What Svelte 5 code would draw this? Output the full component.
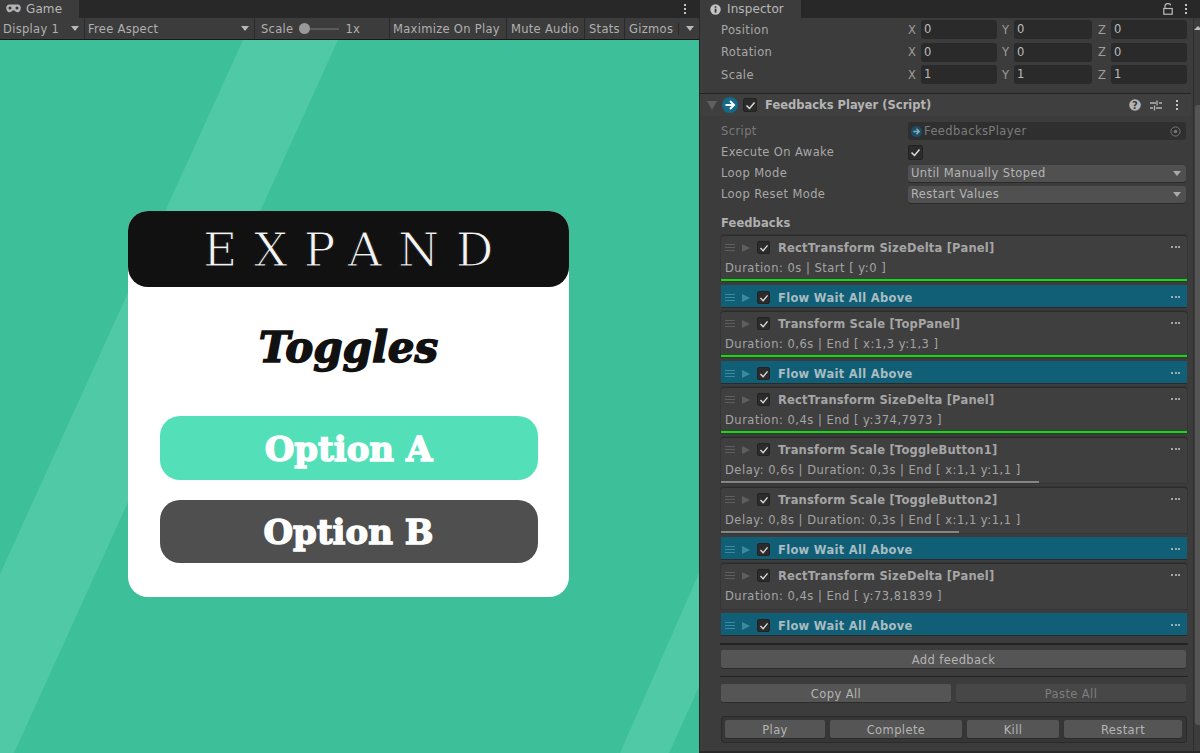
<script>
  // xyz rows at the top of the inspector
  const transformRows = [
    { label: 'Position', v: '0' },
    { label: 'Rotation', v: '0' },
    { label: 'Scale', v: '1' }
  ];

  const feedbacks = [
    { title: 'RectTransform SizeDelta [Panel]', info: 'Duration: 0s | Start [ y:0 ]', bar: '100%', color: 'green' },
    { flow: true },
    { title: 'Transform Scale [TopPanel]', info: 'Duration: 0,6s | End [ x:1,3 y:1,3 ]', bar: '100%', color: 'green' },
    { flow: true },
    { title: 'RectTransform SizeDelta [Panel]', info: 'Duration: 0,4s | End [ y:374,7973 ]', bar: '100%', color: 'green' },
    { title: 'Transform Scale [ToggleButton1]', info: 'Delay: 0,6s | Duration: 0,3s | End [ x:1,1 y:1,1 ]', bar: '318px', color: 'grey' },
    { title: 'Transform Scale [ToggleButton2]', info: 'Delay: 0,8s | Duration: 0,3s | End [ x:1,1 y:1,1 ]', bar: '238px', color: 'grey' },
    { flow: true },
    { title: 'RectTransform SizeDelta [Panel]', info: 'Duration: 0,4s | End [ y:73,81839 ]' },
    { flow: true }
  ];
</script>

<div class="editor">
  <section class="game">
    <div class="tabbar">
      <div class="tab game-tab">
        <svg width="15" height="10" viewBox="0 0 15 10"><path d="M3.5 0.5h8a3.2 3.2 0 0 1 3 4.5 3 3 0 0 1-5 2.5L8.500 6.500h-2L5.500 7.500a3 3 0 0 1-5-2.500 3.200 3.200 0 0 1 3-4.500z" fill="#b4b4b4"/><circle cx="4" cy="4" r="1.500" fill="#333"/><circle cx="11" cy="4" r="1.500" fill="#333"/></svg>
        <span>Game</span>
      </div>
      <div class="spacer"></div>
      <div class="kebab"><i></i><i></i><i></i></div>
    </div>
    <div class="toolbar">
      <div class="tool display">Display 1<b class="caret"></b></div>
      <div class="tool aspect">Free Aspect<b class="caret"></b></div>
      <div class="tool scale">
        Scale
        <span class="slider"><i></i></span>
        <span class="one">1x</span>
      </div>
      <div class="tool maximize">Maximize On Play</div>
      <div class="tool mute">Mute Audio</div>
      <div class="tool stats">Stats</div>
      <div class="tool gizmos">Gizmos<u></u><b class="caret"></b></div>
    </div>
    <div class="viewport">
      <svg class="stripes" width="699" height="713" viewBox="0 0 699 713">
        <polygon points="243,0 338,0 14,713 0,743 0,534" fill="#50c9a6"/>
        <polygon points="699,533 699,647 669,713 620,713" fill="#50c9a6"/>
      </svg>
      <div class="panel">
        <div class="panel-head">EXPAND</div>
        <div class="panel-title">Toggles</div>
        <div class="opt opt-a">Option A</div>
        <div class="opt opt-b">Option B</div>
      </div>
    </div>
  </section>

  <section class="inspector">
    <div class="tabbar">
      <div class="tab insp-tab">
        <svg width="11" height="11" viewBox="0 0 11 11"><circle cx="5.500" cy="5.500" r="5.200" fill="#c4c4c4"/><rect x="4.700" y="4.600" width="1.700" height="4" fill="#333"/><rect x="4.700" y="2.200" width="1.700" height="1.600" fill="#333"/></svg>
        <span>Inspector</span>
      </div>
      <div class="spacer"></div>
      <svg class="lock" width="10" height="12" viewBox="0 0 10 12"><path d="M2 5V3a3 2.500 0 0 1 5.800-.8" fill="none" stroke="#bbb" stroke-width="1.200"/><rect x="0.800" y="5.500" width="8.400" height="5.700" fill="none" stroke="#bbb" stroke-width="1.200"/></svg>
      <div class="kebab"><i></i><i></i><i></i></div>
    </div>

    <div class="body">
      <div class="content">
        <div class="transform">
          {#each transformRows as row}
            <div class="xyz">
              <span class="label">{row.label}</span>
              <span class="axis">X</span><span class="field fx">{row.v}</span>
              <span class="axis ay">Y</span><span class="field fy">{row.v}</span>
              <span class="axis az">Z</span><span class="field fz">{row.v}</span>
            </div>
          {/each}
        </div>

        <div class="comp-head">
          <b class="fold"></b>
          <svg class="script-icon" width="16" height="16" viewBox="0 0 16 16"><circle cx="8" cy="8" r="8" fill="#17698a"/><path d="M3.500 8h8M8 4l4 4-4 4" fill="none" stroke="#fff" stroke-width="2"/></svg>
          <span class="check"><svg width="11" height="9" viewBox="0 0 11 9"><path d="M1.500 4.500l3 3 5-6" fill="none" stroke="#ddd" stroke-width="1.500"/></svg></span>
          <span class="comp-title">Feedbacks Player (Script)</span>
          <svg class="help" width="12" height="12" viewBox="0 0 12 12"><circle cx="6" cy="6" r="5.800" fill="#b4b4b4"/><text x="6" y="9.500" text-anchor="middle" class="q">?</text></svg>
          <svg class="sliders" width="12" height="11" viewBox="0 0 12 11"><path d="M0 3h6M9 3h3M0 8h3M6 8h6M7 0.500v5M4.500 5.500v5" stroke="#b4b4b4" stroke-width="1.300" fill="none"/></svg>
          <div class="kebab comp-kebab"><i></i><i></i><i></i></div>
        </div>

        <div class="props">
          <div class="prop dim">
            <span class="label">Script</span>
            <span class="objfield">
              <svg width="11" height="11" viewBox="0 0 16 16"><circle cx="8" cy="8" r="8" fill="#17506a"/><path d="M3.500 8h8M8 4l4 4-4 4" fill="none" stroke="#9aa" stroke-width="2"/></svg>
              FeedbacksPlayer
              <svg class="target" width="11" height="11" viewBox="0 0 11 11"><circle cx="5.500" cy="5.500" r="4.600" fill="none" stroke="#777"/><circle cx="5.500" cy="5.500" r="1.800" fill="#777"/></svg>
            </span>
          </div>
          <div class="prop">
            <span class="label">Execute On Awake</span>
            <span class="check"><svg width="11" height="9" viewBox="0 0 11 9"><path d="M1.500 4.500l3 3 5-6" fill="none" stroke="#ddd" stroke-width="1.500"/></svg></span>
          </div>
          <div class="prop">
            <span class="label">Loop Mode</span>
            <span class="select">Until Manually Stoped<b class="caret"></b></span>
          </div>
          <div class="prop">
            <span class="label">Loop Reset Mode</span>
            <span class="select">Restart Values<b class="caret"></b></span>
          </div>
        </div>

        <div class="section">Feedbacks</div>

        <div class="list">
          {#each feedbacks as fb}
            {#if fb.flow}
              <div class="flow">
                <div class="row-top">
                  <span class="grip"><i></i><i></i><i></i></span>
                  <b class="play"></b>
                  <span class="check small"><svg width="10" height="8" viewBox="0 0 11 9"><path d="M1.500 4.500l3 3 5-6" fill="none" stroke="#ddd" stroke-width="1.500"/></svg></span>
                  <span class="fb-title">Flow Wait All Above</span>
                  <span class="dots"><i></i><i></i><i></i></span>
                </div>
              </div>
            {:else}
              <div class="card">
                <div class="row-top">
                  <span class="grip"><i></i><i></i><i></i></span>
                  <b class="play"></b>
                  <span class="check small"><svg width="10" height="8" viewBox="0 0 11 9"><path d="M1.500 4.500l3 3 5-6" fill="none" stroke="#ddd" stroke-width="1.500"/></svg></span>
                  <span class="fb-title">{fb.title}</span>
                  <span class="dots"><i></i><i></i><i></i></span>
                </div>
                <div class="info">{fb.info}</div>
                {#if fb.bar}
                  <div class="bar {fb.color}" style="width: {fb.bar}"></div>
                {/if}
              </div>
            {/if}
          {/each}
        </div>

        <div class="rule first"></div>
        <div class="btn add">Add feedback</div>
        <div class="rule"></div>
        <div class="copy-row">
          <div class="btn">Copy All</div>
          <div class="btn off">Paste All</div>
        </div>
        <div class="controls">
          <div class="btn c1">Play</div>
          <div class="btn c2">Complete</div>
          <div class="btn c3">Kill</div>
          <div class="btn c4">Restart</div>
        </div>
      </div>
      <div class="scrollbar">
        <b class="up"></b>
        <div class="thumb"></div>
      </div>
    </div>
  </section>
</div>

<style>
  :global(body) {
    margin: 0;
    overflow: hidden;
    background: #282828;
  }

  .editor {
    display: flex;
    width: 1200px;
    height: 753px;
    font-family: "DejaVu Sans", sans-serif;
    font-size: 11.5px;
    letter-spacing: 0.4px;
    color: #b0b0b0;
    overflow: hidden;
  }

  .game {
    width: 699px;
    display: flex;
    flex-direction: column;
    flex: none;
  }

  .inspector {
    width: 500px;
    height: 751px;
    margin-left: 1px;
    display: flex;
    flex-direction: column;
    background: #3c3c3c;
    flex: none;
  }

  .tabbar {
    height: 18px;
    display: flex;
    align-items: center;
    background: #282828;
    flex: none;
  }

  .tab {
    height: 18px;
    display: flex;
    align-items: center;
    gap: 5px;
    background: #3c3c3c;
    font-size: 12px;
    letter-spacing: 0.1px;
    color: #b8b8b8;
    box-sizing: border-box;
  }

  .game-tab { width: 79px; padding-left: 6px; }
  .insp-tab { width: 101px; padding-left: 10px; gap: 6px; }
  .spacer { flex: 1; }

  .kebab {
    display: flex;
    flex-direction: column;
    gap: 2px;
    width: 2px;
    margin-right: 13px;
  }
  .kebab i { width: 2px; height: 2px; background: #c4c4c4; }

  .lock { margin-right: 12px; }

  .toolbar {
    height: 22px;
    display: flex;
    background: #3c3c3c;
    border-bottom: 1px solid #191919;
    box-sizing: border-box;
    letter-spacing: 0.3px;
    flex: none;
  }

  .tool {
    display: flex;
    align-items: center;
    height: 100%;
    box-sizing: border-box;
    border-right: 1px solid #2a2a2a;
    white-space: nowrap;
    padding-left: 4px;
  }

  .display { width: 85px; padding-left: 3px; }
  .aspect { width: 170px; padding-left: 3px; }
  .scale { width: 135px; padding-left: 6px; }
  .maximize { width: 117px; padding-left: 3px; }
  .mute { width: 78px; }
  .stats { width: 40px; }
  .gizmos { flex: 1; border-right: 0; }
  .gizmos u { width: 1px; height: 12px; background: #2a2a2a; margin-left: 5px; }

  .caret {
    width: 0;
    height: 0;
    margin-left: auto;
    margin-right: 5px;
    border-left: 4.500px solid transparent;
    border-right: 4.500px solid transparent;
    border-top: 5px solid #b8b8b8;
  }

  .slider {
    width: 40px;
    height: 2px;
    margin-left: 6px;
    background: #5a5a5a;
    position: relative;
  }
  .slider i {
    position: absolute;
    left: 0;
    top: -5px;
    width: 11px;
    height: 11px;
    border-radius: 50%;
    background: #999;
  }
  .one { margin-left: 6px; }

  .viewport {
    flex: 1;
    position: relative;
    background: #3dbf99;
    display: flex;
    justify-content: center;
    align-items: flex-start;
    padding: 171px 2px 0 0;
    box-sizing: border-box;
  }

  .stripes {
    position: absolute;
    left: 0;
    top: 0;
  }

  .panel {
    position: relative;
    width: 441px;
    height: 386px;
    background: #fff;
    border-radius: 20px;
    display: flex;
    flex-direction: column;
    align-items: center;
  }

  .panel-head {
    align-self: stretch;
    height: 76px;
    background: #111;
    border-radius: 20px;
    color: #f4f4f4;
    font-family: "DejaVu Serif", serif;
    font-size: 47px;
    letter-spacing: 16.500px;
    padding-left: 16px;
    line-height: 78px;
    text-align: center;
    -webkit-text-stroke: 1.1px #111;
  }

  .panel-title {
    margin-top: 32px;
    height: 97px;
    font-family: "DejaVu Serif", serif;
    font-weight: bold;
    font-style: italic;
    font-size: 42px;
    letter-spacing: 0;
    line-height: 58px;
    color: #111;
    -webkit-text-stroke: 1.5px #111;
  }

  .opt {
    width: 378px;
    height: 64px;
    margin-top: 20px;
    border-radius: 20px;
    font-family: "DejaVu Serif", serif;
    font-weight: bold;
    font-size: 34px;
    letter-spacing: 0;
    line-height: 66px;
    text-align: center;
    color: #fff;
    -webkit-text-stroke: 1.4px #fff;
  }
  .opt-a { background: #53e0b9; margin-top: 0; }
  .opt-b { background: #4f4f4f; height: 63px; line-height: 65px; }

  .body {
    flex: 1;
    display: flex;
    min-height: 0;
  }

  .content {
    width: 491px;
    flex: none;
    box-sizing: border-box;
  }

  .transform {
    height: 75px;
    padding-top: 2px;
    box-sizing: border-box;
    display: flex;
    flex-direction: column;
    gap: 3.500px;
  }

  .xyz {
    height: 19px;
    display: flex;
    align-items: center;
  }

  .label { color: #a8a8a8; width: 188px; padding-left: 21px; box-sizing: border-box; flex: none; }
  .axis { width: 13px; margin-left: 20px; color: #9c9c9c; }
  .axis.ay { margin-left: 5px; width: 12px; }
  .axis.az { margin-left: 6px; width: 13px; }

  .field {
    height: 19px;
    background: #2a2a2a;
    border-radius: 3px;
    box-sizing: border-box;
    padding-left: 3px;
    line-height: 19px;
    color: #bdbdbd;
  }
  .fx { width: 76px; }
  .fy { width: 78px; }
  .fz { width: 76px; }

  .comp-head {
    height: 23px;
    display: flex;
    align-items: center;
    background: #3f3f3f;
    border-top: 1px solid #232323;
    box-sizing: border-box;
  }

  .fold {
    width: 0;
    height: 0;
    margin-left: 7px;
    border-left: 5px solid transparent;
    border-right: 5px solid transparent;
    border-top: 9px solid #606060;
  }

  .script-icon { margin-left: 5px; }

  .check {
    display: flex;
    align-items: center;
    justify-content: center;
    width: 14px;
    height: 14px;
    background: #2b2b2b;
    border: 1px solid #222;
    border-radius: 2px;
    box-sizing: border-box;
    margin-left: 5px;
    flex: none;
  }

  .comp-title {
    margin-left: 8px;
    font-weight: bold;
    letter-spacing: 0;
    color: #b4b4b4;
    flex: 1;
  }

  .sliders { margin-left: 9px; }
  .comp-kebab { margin-left: 14px; margin-right: 13px; }
  .q { font-size: 10px; font-weight: bold; fill: #3c3c3c; font-family: "DejaVu Sans", sans-serif; }

  .props {
    display: flex;
    flex-direction: column;
    gap: 2px;
    padding-top: 5.500px;
  }

  .prop {
    height: 19px;
    display: flex;
    align-items: center;
  }
  .prop .check { margin-left: 20px; width: 15px; height: 15px; }
  .prop.dim .label { color: #7a7a7a; }

  .objfield {
    margin-left: 20px;
    width: 278px;
    height: 18px;
    background: #2f2f2f;
    border-radius: 3px;
    display: flex;
    align-items: center;
    gap: 2px;
    padding-left: 3px;
    box-sizing: border-box;
    color: #7c7c7c;
  }
  .target { margin-left: auto; margin-right: 5px; }

  .select {
    margin-left: 20px;
    width: 278px;
    height: 17px;
    background: #505050;
    border-radius: 3px;
    display: flex;
    align-items: center;
    padding-left: 3px;
    box-sizing: border-box;
    color: #b4b4b4;
    box-shadow: 0 1px 0 #2a2a2a;
  }
  .select .caret { border-top-color: #aaa; margin-right: 5px; }

  .section {
    font-weight: bold;
    letter-spacing: 0.1px;
    color: #b0b0b0;
    padding: 12px 0 0 21px;
    height: 31.500px;
    box-sizing: border-box;
    line-height: 15px;
  }

  .list {
    margin: 0 4px 0 21px;
    display: flex;
    flex-direction: column;
    gap: 4px;
  }

  .card {
    height: 46px;
    background: #3f3f3f;
    box-sizing: border-box;
    border-top: 1px solid #2b2b2b;
    border-radius: 3px 3px 0 0;
    box-shadow: 0 0 0 1px #353535;
    display: flex;
    flex-direction: column;
  }

  .flow {
    height: 22px;
    background: #105f76;
    box-shadow: 0 1px 0 #2a2a2a;
  }

  .row-top {
    height: 23px;
    display: flex;
    align-items: center;
    flex: none;
  }
  .flow .row-top { height: 25px; }

  .grip {
    display: flex;
    flex-direction: column;
    gap: 2px;
    width: 10px;
    margin-left: 4px;
    flex: none;
  }
  .grip i { height: 1px; background: #5e5e5e; }
  .flow .grip i { background: #3c8aa0; }

  .play {
    width: 0;
    height: 0;
    margin-left: 7px;
    border-top: 4.500px solid transparent;
    border-bottom: 4.500px solid transparent;
    border-left: 8px solid #5e5e5e;
    flex: none;
  }
  .flow .play { border-left-color: #3c8aa0; }

  .check.small { width: 13px; height: 13px; margin-left: 7px; }

  .fb-title {
    margin-left: 8px;
    font-weight: bold;
    letter-spacing: 0.2px;
    color: #a6a6a6;
    flex: 1;
    white-space: nowrap;
  }
  .flow .fb-title { color: #a8bcc2; letter-spacing: 0.3px; }

  .dots { display: flex; gap: 1.500px; margin-right: 7px; margin-top: -2px; }
  .dots i { width: 2px; height: 2px; background: #c8c8c8; border-radius: 50%; }

  .info {
    padding-left: 4px;
    margin-top: -1px;
    letter-spacing: 0.5px;
    color: #a4a4a4;
    line-height: 20px;
    white-space: nowrap;
  }

  .bar {
    height: 2px;
    margin-top: auto;
    flex: none;
  }
  .bar.green { background: #10dc10; }
  .bar.grey { background: #868686; }

  .rule {
    height: 1px;
    margin: 8px 3px 7px 20px;
    background: #232323;
  }
  .rule.first { height: 2px; margin-bottom: 5px; }

  .btn {
    height: 18px;
    background: #555;
    border-radius: 2px;
    text-align: center;
    line-height: 20px;
    color: #b4b4b4;
    box-shadow: 0 1px 0 #2c2c2c;
    flex: 1;
  }
  .btn.add { margin: 0 5px 0 21px; }
  .btn.off { background: #474747; color: #7e7e7e; }

  .copy-row {
    display: flex;
    gap: 5px;
    margin: 0 5px 0 21px;
  }

  .controls {
    display: flex;
    gap: 5px;
    margin: 14px 4px 0 21px;
    padding: 3px 3px 4px;
    background: #363636;
    border: 1px solid #2a2a2a;
    border-radius: 3px;
    box-sizing: border-box;
  }
  .controls .btn { flex: none; }
  .c1 { width: 100px; }
  .c2 { width: 132px; }
  .c3 { width: 92px; }
  .c4 { width: 118px; }

  .scrollbar {
    flex: 1;
    margin-left: 2px;
    border-left: 1px solid #2d2d2d;
    display: flex;
    flex-direction: column;
    align-items: center;
  }

  .up {
    width: 0;
    height: 0;
    margin-top: 8px;
    border-left: 4px solid transparent;
    border-right: 4px solid transparent;
    border-bottom: 4px solid #bbb;
  }

  .thumb {
    align-self: stretch;
    margin-top: 75px;
    height: 620px;
    background: #555;
    border-radius: 3px;
    margin-left: 1px;
  }
</style>
